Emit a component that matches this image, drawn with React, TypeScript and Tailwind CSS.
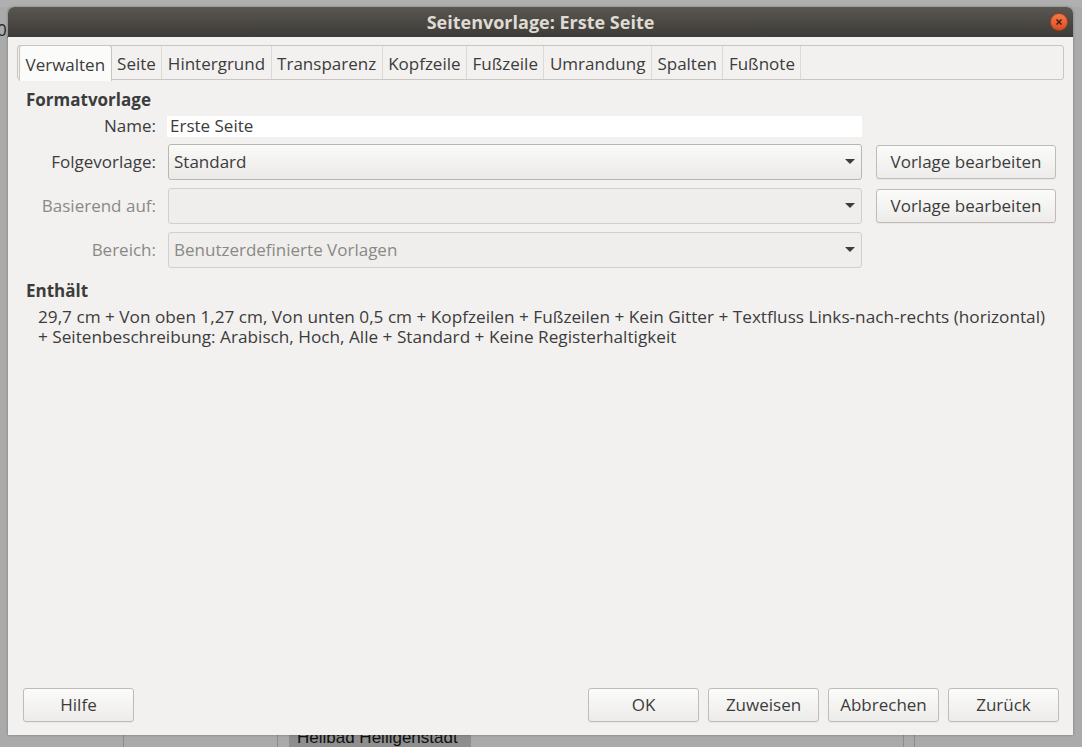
import React from "react";

const font = { fontFamily: '"Open Sans", "Noto Sans", sans-serif' };

function Arrow() {
  return (
    <svg width="10" height="6" viewBox="0 0 10 6" className="shrink-0">
      <path d="M0 0 L10 0 L5 5 Z" fill="#3c3c3c" />
    </svg>
  );
}

function Btn({ children, w = "w-[111px]" }: { children: React.ReactNode; w?: string }) {
  return (
    <div
      className={`${w} h-[34px] flex items-center justify-center rounded-[3px] border border-[#bfbcb8] bg-gradient-to-b from-[#fbfbfa] to-[#edecea] text-[#3c3c3c] shadow-[0_1px_0_rgba(0,0,0,0.04)]`}
    >
      {children}
    </div>
  );
}

function Combo({ text, disabled }: { text: string; disabled?: boolean }) {
  return (
    <div
      className={`w-[694px] h-[36px] flex items-center justify-between pl-[5px] pr-[6px] rounded-[3px] border ${
        disabled
          ? "border-[#d3d0cc] bg-[#efeeec] text-[#8a8985]"
          : "border-[#b9b6b1] bg-gradient-to-b from-[#fafaf9] to-[#ebeae8] text-[#3c3c3c]"
      }`}
    >
      <span>{text}</span>
      <Arrow />
    </div>
  );
}

const tabs = [
  "Verwalten",
  "Seite",
  "Hintergrund",
  "Transparenz",
  "Kopfzeile",
  "Fußzeile",
  "Umrandung",
  "Spalten",
  "Fußnote",
];

export default function App() {
  return (
    <div className="w-[1082px] h-[747px] bg-[#aaaaaa] relative overflow-hidden" style={font}>
      {/* background app remnants */}
      <div className="absolute left-0 top-0 w-full h-[7px] bg-[#b0b0b0]" />
      <div className="absolute left-[123px] top-[735px] w-px h-[12px] bg-[#8c8c8c]" />
      <div className="absolute left-[277px] top-[735px] h-[12px] w-px bg-[#8c8c8c]" />
      <div
        className="absolute left-[289px] top-[728px] h-[19px] w-[182px] bg-[#8e8e8e] text-[17px] leading-[19px] text-[#111] overflow-hidden pl-[8px]"
        style={{ fontFamily: '"Liberation Sans", sans-serif' }}
      >
        Heilbad Heiligenstadt
      </div>
      <div className="absolute left-[903px] top-[735px] h-[12px] w-px bg-[#8c8c8c]" />
      <div className="absolute left-[914px] top-[735px] h-[12px] w-px bg-[#8c8c8c]" />
      <div className="absolute left-[-3px] top-[20px] text-[17px] text-[#222] leading-[20px]">0,</div>

      {/* dialog window */}
      <div className="absolute left-[8px] top-[7px] w-[1065px] h-[728px] flex flex-col bg-[#f2f1f0] rounded-t-[6px] overflow-hidden shadow-[0_0_3px_rgba(0,0,0,0.3)]">
        {/* title bar */}
        <div className="h-[30px] shrink-0 relative flex items-center justify-center bg-gradient-to-b from-[#5a5752] to-[#3d3b37]">
          <span className="text-[#dfdbd2] font-bold text-[18px] leading-[22px]">Seitenvorlage: Erste Seite</span>
          <div className="absolute right-[5px] top-[6px] w-[18px] h-[18px] rounded-full bg-gradient-to-b from-[#f37b4e] to-[#db4c1f] border border-[#a8411c] flex items-center justify-center">
            <svg width="8" height="8" viewBox="0 0 8 8">
              <path d="M1.5 1.5 L6.5 6.5 M6.5 1.5 L1.5 6.5" stroke="#3b1a0c" strokeWidth="1.4" />
            </svg>
          </div>
        </div>

        {/* content */}
        <div className="flex-1 flex flex-col px-[9px] pt-[8px] text-[17px] leading-[22px] text-[#3c3c3c]">
          {/* tab strip */}
          <div className="h-[35px] border border-[#c9c6c2] rounded-[3px] flex items-stretch pl-[1px] bg-[#f2f1f0]">
            {tabs.map((t, i) => (
              <div
                key={t}
                className={`flex items-center pt-[2px] px-[5.5px] ${
                  i === 0
                    ? "bg-[#fbfbfa] border border-b-0 border-[#c9c6c2] rounded-t-[3px] -mt-[1px] h-[36px] text-[#3c3c3c]"
                    : "border-r border-[#dcdad6] text-[#3c3c3c]"
                }`}
              >
                {t}
              </div>
            ))}
          </div>

          {/* Formatvorlage */}
          <div className="mt-[9px] pl-[9px] font-bold">Formatvorlage</div>
          <div className="mt-[4px] flex items-center">
            <div className="w-[139px] text-right">Name:</div>
            <div className="ml-[11px] w-[695px] h-[21px] bg-white flex items-center pl-[3px]">Erste Seite</div>
          </div>
          <div className="mt-[7px] flex items-center">
            <div className="w-[139px] text-right">Folgevorlage:</div>
            <div className="ml-[12px]"><Combo text="Standard" /></div>
            <div className="ml-[14px]"><Btn w="w-[180px]">Vorlage bearbeiten</Btn></div>
          </div>
          <div className="mt-[8px] flex items-center">
            <div className="w-[139px] text-right text-[#8a8985]">Basierend auf:</div>
            <div className="ml-[12px]"><Combo text="" disabled /></div>
            <div className="ml-[14px]"><Btn w="w-[180px]">Vorlage bearbeiten</Btn></div>
          </div>
          <div className="mt-[8px] flex items-center">
            <div className="w-[139px] text-right text-[#8a8985]">Bereich:</div>
            <div className="ml-[12px]"><Combo text="Benutzerdefinierte Vorlagen" disabled /></div>
          </div>

          <div className="mt-[12px] pl-[9px] font-bold">Enthält</div>
          <div className="mt-[5px] pl-[21px] text-[17.2px] leading-[20px]">
            <div>29,7 cm + Von oben 1,27 cm, Von unten 0,5 cm + Kopfzeilen + Fußzeilen + Kein Gitter + Textfluss Links-nach-rechts (horizontal)</div>
            <div>+ Seitenbeschreibung: Arabisch, Hoch, Alle + Standard + Keine Registerhaltigkeit</div>
          </div>

          <div className="flex-1" />

          {/* bottom buttons */}
          <div className="flex items-center pl-[6px] pr-[5px] mb-[13px]">
            <Btn>Hilfe</Btn>
            <div className="flex-1" />
            <div className="flex gap-[9px]">
              <Btn>OK</Btn>
              <Btn>Zuweisen</Btn>
              <Btn>Abbrechen</Btn>
              <Btn>Zurück</Btn>
            </div>
          </div>
        </div>
      </div>
    </div>
  );
}
